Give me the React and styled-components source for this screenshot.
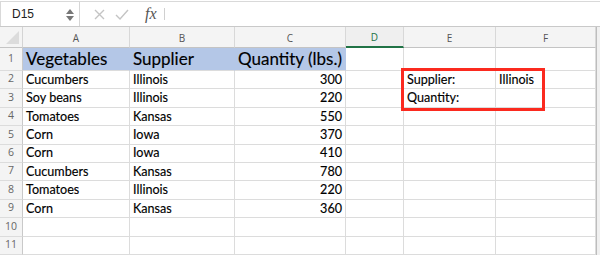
import React from "react";
import styled, { createGlobalStyle } from "styled-components";

const Global = createGlobalStyle`
  html, body { margin: 0; padding: 0; background: #ffffff; }
  body { font-family: Lato, "Open Sans", sans-serif; overflow: hidden; }
  * { box-sizing: border-box; }
`;

const Page = styled.div`
  width: 600px;
  height: 255px;
  padding-top: 1px;
  background: #ffffff;
  overflow: hidden;
`;

const FormulaBar = styled.div`
  display: flex;
  align-items: stretch;
  height: 26px;
  border-top: 1px solid #d9d9d9;
  border-bottom: 1px solid #c9c9c9;
  background: #ffffff;
`;

const NameBox = styled.div`
  width: 80px;
  display: flex;
  align-items: center;
  justify-content: space-between;
  padding: 0 5px 0 11px;
  border-left: 1px solid #d9d9d9;
  border-right: 1px solid #d6d6d6;
  font-size: 12px;
  color: #222;
  font-family: "Liberation Sans", Arial, sans-serif;
`;

const Spinner = styled.div`
  display: flex;
  flex-direction: column;
  align-items: center;
  gap: 2px;
  margin-top: 1px;
`;

const Actions = styled.div`
  display: flex;
  align-items: center;
  width: 90px;
  padding-left: 14px;
  gap: 10px;
`;

const FxLabel = styled.span`
  font-family: "Liberation Serif", "DejaVu Serif", serif;
  font-style: italic;
  font-size: 16px;
  color: #555;
  margin-left: 6px;
  padding-right: 7px;
  border-right: 1px solid #d0d0d0;
  line-height: 12px;
  height: 12px;
`;

const FormulaInput = styled.div`
  flex: 1;
`;

const Sheet = styled.div`
  position: relative;
  display: grid;
  grid-template-columns: 23px 107px 105px 111px 58px 92px 100px 4px;
  grid-template-rows: 21px 23px repeat(10, 18.4px);
`;

const Corner = styled.div`
  background: #f4f4f4;
  border-right: 1px solid #d4d4d4;
  border-bottom: 1px solid #c4c4c4;
  position: relative;
  &::after {
    content: "";
    position: absolute;
    right: 3px;
    bottom: 3px;
    width: 0;
    height: 0;
    border-left: 13px solid transparent;
    border-bottom: 13px solid #dcdcdc;
  }
`;

const ColHead = styled.div`
  display: flex;
  align-items: center;
  justify-content: center;
  padding-top: 1px;
  background: ${(p) => (p.$active ? "#efefef" : "#f4f4f4")};
  border-right: 1px solid #d8d8d8;
  border-bottom: ${(p) => (p.$active ? "2px solid #217346" : "1px solid #c4c4c4")};
  font-size: 10px;
  color: ${(p) => (p.$active ? "#217346" : "#555")};
  font-family: "Open Sans", Lato, sans-serif;
`;

const RowHead = styled.div`
  display: flex;
  align-items: flex-end;
  justify-content: center;
  padding-bottom: ${(p) => (p.$big ? 5 : 3)}px;
  background: #f4f4f4;
  border-right: 1px solid #c9c9c9;
  border-bottom: 1px solid #dcdcdc;
  font-size: 10.5px;
  color: #666;
  font-family: "Open Sans", Lato, sans-serif;
`;

const Cell = styled.div`
  display: flex;
  align-items: flex-end;
  justify-content: ${(p) => (p.$num ? "flex-end" : "flex-start")};
  padding: 0 ${(p) => (p.$num ? 3 : 2)}px ${(p) => (p.$big ? 3 : 2)}px 3px;
  background: ${(p) => (p.$fill ? "#b4c7e7" : "#ffffff")};
  border-right: 1px solid ${(p) => (p.$fill ? "#b4c7e7" : "#dcdcdc")};
  border-bottom: 1px solid #dcdcdc;
  font-size: ${(p) => (p.$big ? 17 : 12.6)}px;
  line-height: 1;
  color: #000;
  white-space: nowrap;
  overflow: visible;
  -webkit-text-stroke: 0.15px #000;
`;

const Edge = styled.div`
  background: #f0f0f0;
  border-left: 1px solid #bdbdbd;
`;

const Highlight = styled.div`
  position: absolute;
  left: 401px;
  top: 41px;
  width: 144px;
  height: 43px;
  border: 3px solid #fb2a1f;
  pointer-events: none;
`;

const cols = ["A", "B", "C", "D", "E", "F"];

const data = [
  ["Cucumbers", "Illinois", "300", "", "Supplier:", "Illinois"],
  ["Soy beans", "Illinois", "220", "", "Quantity:", ""],
  ["Tomatoes", "Kansas", "550", "", "", ""],
  ["Corn", "Iowa", "370", "", "", ""],
  ["Corn", "Iowa", "410", "", "", ""],
  ["Cucumbers", "Kansas", "780", "", "", ""],
  ["Tomatoes", "Illinois", "220", "", "", ""],
  ["Corn", "Kansas", "360", "", "", ""],
  ["", "", "", "", "", ""],
  ["", "", "", "", "", ""],
];

export default function App() {
  return (
    <Page>
      <Global />
      <FormulaBar>
        <NameBox>
          <span>D15</span>
          <Spinner>
            <svg width="8" height="5" viewBox="0 0 8 5"><path d="M4 0 L8 5 L0 5 Z" fill="#777" /></svg>
            <svg width="8" height="5" viewBox="0 0 8 5"><path d="M0 0 L8 0 L4 5 Z" fill="#777" /></svg>
          </Spinner>
        </NameBox>
        <Actions>
          <svg width="11" height="11" viewBox="0 0 11 11">
            <path d="M1 1 L10 10 M10 1 L1 10" stroke="#c4c4c4" strokeWidth="1.4" fill="none" />
          </svg>
          <svg width="14" height="11" viewBox="0 0 14 11">
            <path d="M1 6 L5 10 L13 1" stroke="#c4c4c4" strokeWidth="1.4" fill="none" />
          </svg>
          <FxLabel>fx</FxLabel>
        </Actions>
        <FormulaInput />
      </FormulaBar>
      <Sheet>
        <Corner />
        {cols.map((c) => (
          <ColHead key={c} $active={c === "D"}>{c}</ColHead>
        ))}
        <Edge />
        <RowHead $big>1</RowHead>
        <Cell $big $fill>Vegetables</Cell>
        <Cell $big $fill>Supplier</Cell>
        <Cell $big $fill $num>Quantity (lbs.)</Cell>
        <Cell />
        <Cell />
        <Cell />
        <Edge />
        {data.map((row, i) => (
          <React.Fragment key={i}>
            <RowHead>{i + 2}</RowHead>
            {row.map((v, j) => (
              <Cell key={j} $num={j === 2}>{v}</Cell>
            ))}
            <Edge />
          </React.Fragment>
        ))}
        <Highlight />
      </Sheet>
    </Page>
  );
}
